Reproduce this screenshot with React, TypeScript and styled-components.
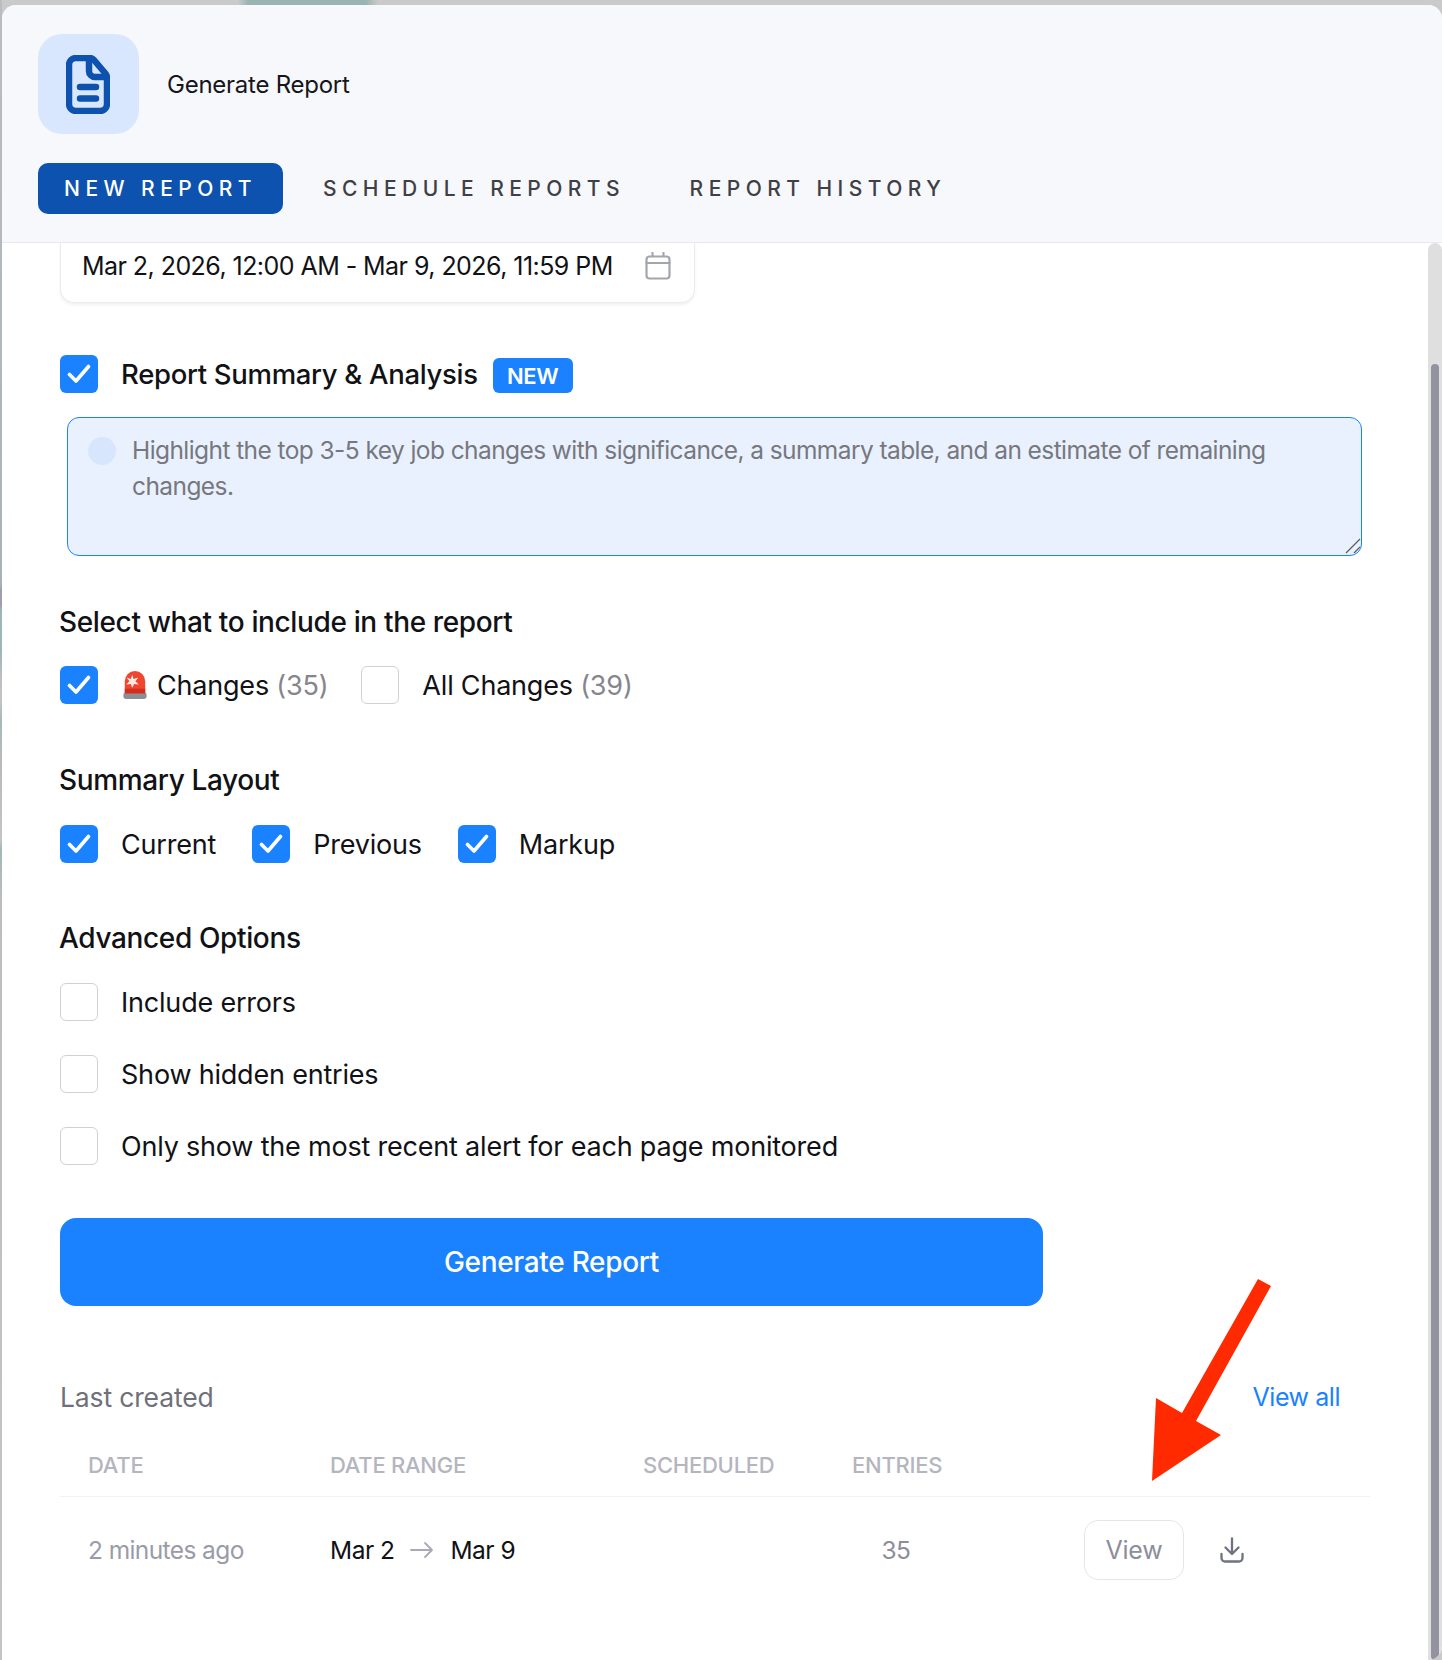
import React from "react";
import styled, { createGlobalStyle } from "styled-components";

const Global = createGlobalStyle`
  html, body { margin: 0; padding: 0; }
  body {
    width: 1442px;
    height: 1660px;
    overflow: hidden;
    font-family: Inter, "Liberation Sans", sans-serif;
    color: #111216;
    background-color: #c9cac9;
    background-image:
      linear-gradient(90deg, transparent 238px, #9ab4b3 248px, #9ab4b3 366px, transparent 378px),
      linear-gradient(180deg, #bcbcc0 0, #a6b4b6 580px, #9fb5b5 585px, #a09db0 590px, #a09db0 605px, #9ab8b6 610px, #9ab8b6 650px, #bdbcc2 675px, #c4c4c4 700px, #a5bab8 720px, #b9b9bd 760px, #c4c4c4 840px, #9fb8b6 850px, #bdbdbd 900px, #c4c4c4 1660px);
    background-size: 100% 5px, 2px 100%;
    background-repeat: no-repeat;
  }
  #root { position: relative; width: 1442px; height: 1660px; }
`;

const Panel = styled.main`
  margin-left: 2px;
  width: 1440px;
  height: 1655px;
  position: relative;
  top: 5px;
  background: #ffffff;
  border-radius: 14px 14px 14px 0;
  overflow: hidden;
  display: flex;
  flex-direction: column;
`;

const Header = styled.header`
  height: 238px;
  box-sizing: border-box;
  flex: none;
  padding: 29px 36px 0;
  background: #f7f8fc;
  border-bottom: 1px solid #e9eaef;
`;

const TitleRow = styled.div`
  display: flex;
  align-items: center;
  gap: 28px;
`;

const IconTile = styled.div`
  width: 101px;
  height: 100px;
  border-radius: 24px;
  background: #d9e7fe;
  display: flex;
  align-items: center;
  justify-content: center;
  padding-right: 1px;
  box-sizing: border-box;
`;

const Title = styled.h1`
  margin: 0;
  font-size: 24px;
  font-weight: 400;
  letter-spacing: -0.25px;
  color: #15161a;
`;

const Tabs = styled.nav`
  display: flex;
  margin-top: 29px;
  gap: 42px;
`;

const Tab = styled.div<{ $active?: boolean; $width: number; $shift?: number }>`
  width: ${(p) => p.$width}px;
  height: 51px;
  margin-left: ${(p) => p.$shift ?? 0}px;
  border-radius: 10px;
  display: flex;
  align-items: center;
  justify-content: center;
  font-size: 21px;
  font-weight: 500;
  letter-spacing: 5.45px;
  white-space: nowrap;
  background: ${(p) => (p.$active ? "#0d52ae" : "transparent")};
  color: ${(p) => (p.$active ? "#ffffff" : "#3f4045")};
`;

const BodyRow = styled.div`
  flex: 1;
  min-height: 0;
  display: flex;
`;

const Content = styled.div`
  flex: 1;
  min-width: 0;
  padding-left: 58px;
`;

const Track = styled.aside`
  width: 14px;
  flex: none;
  box-sizing: border-box;
  padding: 121px 3px 0;
  background: #dfdfdf;
  border-radius: 8px 8px 0 0;
  display: flex;
`;

const Thumb = styled.div`
  flex: 1;
  background: #9393a0;
  border-radius: 5px;
`;

const DateBox = styled.div`
  width: 635px;
  height: 60px;
  box-sizing: border-box;
  padding: 0 23px 14px 21px;
  border: 1px solid #eaebf0;
  border-top: none;
  border-radius: 0 0 14px 14px;
  box-shadow: 0 2px 3px rgba(40, 50, 90, 0.07);
  display: flex;
  align-items: center;
  justify-content: space-between;
  font-size: 25px;
  letter-spacing: -0.55px;
  white-space: nowrap;
`;

const CheckRow = styled.div<{ $top?: number; $gap?: number }>`
  display: flex;
  align-items: center;
  height: 38px;
  margin-top: ${(p) => p.$top ?? 0}px;
  gap: ${(p) => p.$gap ?? 36}px;
`;

const Check = styled.label`
  display: inline-flex;
  align-items: center;
  gap: 23px;
  font-size: 27px;
  letter-spacing: -0.2px;
  white-space: nowrap;
`;

const Box = styled.span<{ $on?: boolean }>`
  width: 38px;
  height: 38px;
  flex: none;
  box-sizing: border-box;
  border-radius: 6px;
  display: inline-flex;
  align-items: center;
  justify-content: center;
  background: ${(p) => (p.$on ? "#1a82ff" : "#ffffff")};
  border: ${(p) => (p.$on ? "none" : "1.5px solid #d0d1d6")};
`;

const Muted = styled.span`
  color: #85868d;
`;

const EmojiLabel = styled.span`
  display: inline-flex;
  align-items: center;
  gap: 9px;
  margin-left: 1px;
`;

const FeatureLabel = styled.span`
  font-size: 27.5px;
  font-weight: 500;
  letter-spacing: -0.31px;
`;

const Badge = styled.span`
  width: 80px;
  height: 35px;
  margin: 3px 0 0 -8px;
  border-radius: 6px;
  background: #1a82ff;
  color: #ffffff;
  display: inline-flex;
  align-items: center;
  justify-content: center;
  font-size: 22px;
  font-weight: 600;
  letter-spacing: -0.4px;
`;

const PromptWrap = styled.div`
  position: relative;
  width: 1295px;
  height: 139px;
  margin: 24px 0 0 7px;
`;

const Prompt = styled.textarea`
  display: block;
  width: 100%;
  height: 100%;
  box-sizing: border-box;
  padding: 14px 40px 0 64px;
  border: 1px solid #1a82ff;
  border-radius: 12px;
  background: #e9f1fe;
  outline: none;
  resize: none;
  font-family: inherit;
  font-size: 24.5px;
  line-height: 36px;
  letter-spacing: -0.58px;
  &::placeholder { color: #77787e; opacity: 1; }
`;

const Dot = styled.span`
  position: absolute;
  left: 21px;
  top: 20px;
  width: 28px;
  height: 28px;
  border-radius: 50%;
  background: #d8e6fd;
`;

const Grip = styled.svg`
  position: absolute;
  right: 1px;
  bottom: 2px;
`;

const Heading = styled.h2<{ $top: number }>`
  margin: ${(p) => p.$top}px 0 0 -1px;
  height: 34px;
  line-height: 34px;
  font-size: 28px;
  font-weight: 500;
  letter-spacing: -0.36px;
`;

const OptionList = styled.div`
  margin-top: 28px;
  display: flex;
  flex-direction: column;
  gap: 34px;
`;

const Primary = styled.button`
  display: block;
  width: 983px;
  height: 88px;
  margin-top: 53px;
  border: none;
  border-radius: 16px;
  background: #1a82ff;
  color: #ffffff;
  font-family: inherit;
  font-size: 28px;
  font-weight: 500;
  letter-spacing: -0.3px;
`;

const LastRow = styled.div`
  width: 1280px;
  height: 34px;
  margin-top: 74px;
  display: flex;
  align-items: center;
  justify-content: space-between;
`;

const LastTitle = styled.span`
  font-size: 26.5px;
  letter-spacing: -0.15px;
  color: #6f7079;
`;

const ViewAll = styled.a`
  font-size: 25px;
  letter-spacing: -0.45px;
  color: #1a82ff;
`;

const Table = styled.div`
  width: 1310px;
  margin-top: 35px;
`;

const Cols = styled.div`
  display: grid;
  grid-template-columns: 270px 313px 209px 232px 1fr;
  align-items: center;
`;

const HeadRow = styled(Cols)`
  height: 48px;
  padding-bottom: 15px;
  box-sizing: border-box;
  border-bottom: 1px solid #f1f2f5;
  font-size: 22px;
  font-weight: 500;
  letter-spacing: -0.25px;
  color: #b4b5be;
`;

const DataRow = styled(Cols)`
  height: 106px;
  font-size: 24.5px;
  letter-spacing: -0.5px;
`;

const FirstCell = styled.div`
  padding-left: 28px;
`;

const AgoCell = styled(FirstCell)`
  color: #9a9ba8;
  letter-spacing: -0.6px;
`;

const RangeCell = styled.div`
  display: flex;
  align-items: center;
  gap: 16px;
`;

const EntriesValue = styled.div`
  width: 88px;
  text-align: center;
  color: #8d8e9a;
`;

const Actions = styled.div`
  display: flex;
  align-items: center;
  gap: 36px;
`;

const ViewButton = styled.button`
  width: 100px;
  height: 60px;
  border: 1px solid #e5e6ec;
  border-radius: 14px;
  background: #ffffff;
  font-family: inherit;
  font-size: 25px;
  letter-spacing: -0.2px;
  color: #8d8e9a;
`;

const Annotation = styled.svg`
  position: absolute;
  left: 1140px;
  top: 1270px;
  pointer-events: none;
`;

const CheckMark = () => (
  <svg width="24" height="20" viewBox="0 0 24 20" fill="none">
    <path d="M2.5 10.5 L9 17 L21.5 2.5" stroke="#fff" strokeWidth="3.6" strokeLinecap="round" strokeLinejoin="round" />
  </svg>
);

const Tick = ({ on }: { on?: boolean }) => <Box $on={on}>{on && <CheckMark />}</Box>;

const DocIcon = () => (
  <svg width="44" height="59" viewBox="0 0 44 59" fill="none" stroke="#0d52ae" strokeWidth="6.5" strokeLinejoin="round" strokeLinecap="round">
    <path d="M10 3 H24 Q26 3 28 5 L39 18 Q41 20 41 23 V49 A7 7 0 0 1 34 56 H10 A7 7 0 0 1 3 49 V10 A7 7 0 0 1 10 3 Z" />
    <path d="M23 4 V16 A6 6 0 0 0 29 22 H40" />
    <path d="M14 32 H30 M14 43.5 H30" />
  </svg>
);

const CalendarIcon = () => (
  <svg width="26" height="28" viewBox="0 0 26 28" fill="none" stroke="#a4a6ad" strokeWidth="2.2" strokeLinecap="round" strokeLinejoin="round">
    <rect x="1.5" y="4.5" width="23" height="22" rx="3" />
    <path d="M1.5 11 H24.5 M7.5 1 V4 M18.5 1 V4" />
  </svg>
);

const Siren = () => (
  <svg width="26" height="30" viewBox="0 0 28 32">
    <rect x="1.5" y="24" width="25" height="7" rx="2.5" fill="#8b8f94" />
    <path d="M3 25 V12 A11 11 0 0 1 25 12 V25 Z" fill="#f0452f" />
    <path d="M3 25 V20 H25 V25 Z" fill="#d42c1e" />
    <path d="M11 5 L12.5 9.5 L17.5 8 L14.5 12 L18 15.5 L13 14.8 L11 19 L9.5 14.8 L4.5 15.5 L8 12 L5 8 L9.5 9.5 Z" fill="#ffe9e4" />
  </svg>
);

const ArrowIcon = () => (
  <svg width="24" height="18" viewBox="0 0 24 18" fill="none" stroke="#a9aab6" strokeWidth="1.8" strokeLinecap="round" strokeLinejoin="round">
    <path d="M1 9 H22 M15 2 L22 9 L15 16" />
  </svg>
);

const DownloadIcon = () => (
  <svg width="24" height="26" viewBox="0 0 24 26" fill="none" stroke="#6f7280" strokeWidth="2.3" strokeLinecap="round" strokeLinejoin="round">
    <path d="M12 1.5 V17 M5.5 10.5 L12 17 L18.5 10.5" />
    <path d="M1.5 17 V21 A3.5 3.5 0 0 0 5 24.5 H19 A3.5 3.5 0 0 0 22.5 21 V17" />
  </svg>
);

export default function App() {
  return (
    <>
      <Global />
      <Panel>
        <Header>
          <TitleRow>
            <IconTile><DocIcon /></IconTile>
            <Title>Generate Report</Title>
          </TitleRow>
          <Tabs>
            <Tab $active $width={245}>NEW REPORT</Tab>
            <Tab $width={298}>SCHEDULE REPORTS</Tab>
            <Tab $width={252} $shift={27}>REPORT HISTORY</Tab>
          </Tabs>
        </Header>
        <BodyRow>
          <Content>
            <DateBox>
              <span>Mar 2, 2026, 12:00 AM - Mar 9, 2026, 11:59 PM</span>
              <CalendarIcon />
            </DateBox>
            <CheckRow $top={52} $gap={23}>
              <Tick on />
              <FeatureLabel>Report Summary &amp; Analysis</FeatureLabel>
              <Badge>NEW</Badge>
            </CheckRow>
            <PromptWrap>
              <Prompt
                readOnly
                placeholder="Highlight the top 3-5 key job changes with significance, a summary table, and an estimate of remaining changes."
              />
              <Dot />
              <Grip width="16" height="16" viewBox="0 0 16 16" fill="none" stroke="#5a5a5a" strokeWidth="1.2">
                <path d="M1 15 L15 1 M9 15 L15 9" />
              </Grip>
            </PromptWrap>

            <Heading $top={49}>Select what to include in the report</Heading>
            <CheckRow $top={27} $gap={33}>
              <Check>
                <Tick on />
                <EmojiLabel><Siren /><span>Changes <Muted>(35)</Muted></span></EmojiLabel>
              </Check>
              <Check>
                <Tick />
                <span>All Changes <Muted>(39)</Muted></span>
              </Check>
            </CheckRow>

            <Heading $top={59}>Summary Layout</Heading>
            <CheckRow $top={28}>
              <Check><Tick on />Current</Check>
              <Check><Tick on />Previous</Check>
              <Check><Tick on />Markup</Check>
            </CheckRow>

            <Heading $top={58}>Advanced Options</Heading>
            <OptionList>
              <Check><Tick />Include errors</Check>
              <Check><Tick />Show hidden entries</Check>
              <Check><Tick />Only show the most recent alert for each page monitored</Check>
            </OptionList>

            <Primary>Generate Report</Primary>

            <LastRow>
              <LastTitle>Last created</LastTitle>
              <ViewAll>View all</ViewAll>
            </LastRow>
            <Table>
              <HeadRow>
                <FirstCell>DATE</FirstCell>
                <div>DATE RANGE</div>
                <div>SCHEDULED</div>
                <div>ENTRIES</div>
                <div />
              </HeadRow>
              <DataRow>
                <AgoCell>2 minutes ago</AgoCell>
                <RangeCell>
                  <span>Mar 2</span>
                  <ArrowIcon />
                  <span>Mar 9</span>
                </RangeCell>
                <div />
                <EntriesValue>35</EntriesValue>
                <Actions>
                  <ViewButton>View</ViewButton>
                  <DownloadIcon />
                </Actions>
              </DataRow>
            </Table>
          </Content>
          <Track><Thumb /></Track>
        </BodyRow>
      </Panel>
      <Annotation width="140" height="220" viewBox="1140 1270 140 220">
        <polygon points="1258,1279 1271,1286 1196,1421 1221,1435 1152,1481 1156,1398 1182,1413" fill="#ff2a00" />
      </Annotation>
    </>
  );
}
